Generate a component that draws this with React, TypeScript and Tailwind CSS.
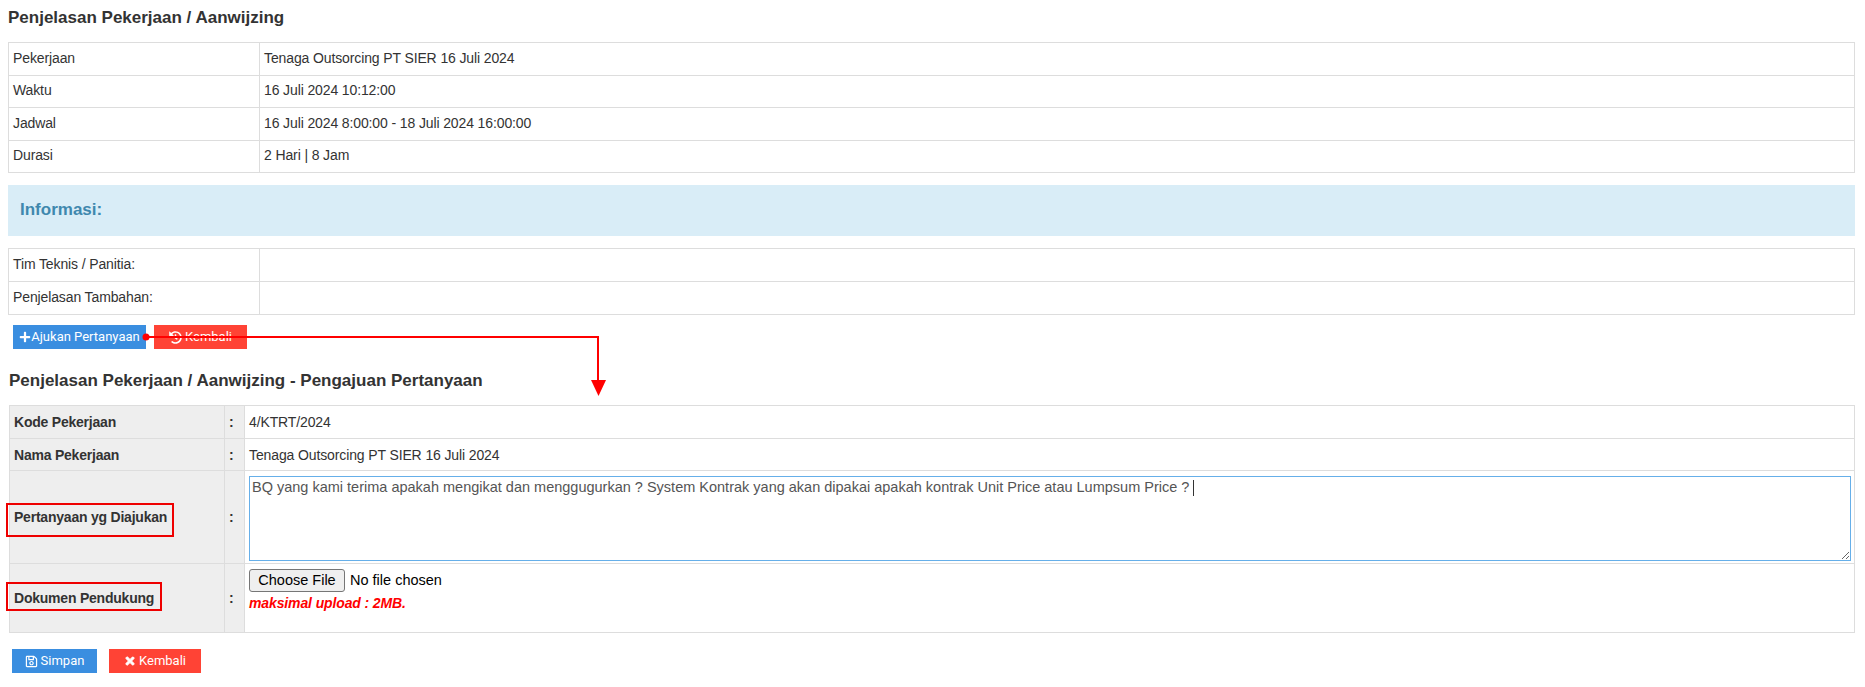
import { FaHistory, FaPlus, FaRegSave, FaTimes } from "react-icons/fa";

const jobRows = [
  ["Pekerjaan", "Tenaga Outsorcing PT SIER 16 Juli 2024"],
  ["Waktu", "16 Juli 2024 10:12:00"],
  ["Jadwal", "16 Juli 2024 8:00:00 - 18 Juli 2024 16:00:00"],
  ["Durasi", "2 Hari | 8 Jam"],
];

const infoRows = ["Tim Teknis / Panitia:", "Penjelasan Tambahan:"];

const question =
  "BQ yang kami terima apakah mengikat dan menggugurkan ? System Kontrak yang akan dipakai apakah kontrak Unit Price atau Lumpsum Price ?";

const InfoTable = ({ rows, rowClass }: { rows: string[][]; rowClass: string }) => (
  <table className="w-[1847px] border-collapse table-fixed tracking-[-0.12px]">
    <tbody>
      {rows.map(([label, value]) => (
        <tr key={label} className={rowClass}>
          <td className="w-[251px] border border-[#ddd] px-1 pb-[2px] pt-0">{label}</td>
          <td className="border border-[#ddd] px-1 pb-[2px] pt-0">{value}</td>
        </tr>
      ))}
    </tbody>
  </table>
);

const FormRow = ({
  label,
  height,
  children,
  mark,
}: {
  label: string;
  height: string;
  children: React.ReactNode;
  mark?: string;
}) => (
  <tr className={height}>
    <td className="relative w-[215px] border border-[#ddd] bg-[#eee] px-1 py-0 font-bold tracking-[-0.22px]">
      {label}
      {mark && <span className={`absolute left-[-4px] border-2 border-[#ee0000] ${mark}`} />}
    </td>
    <td className="w-[20px] border border-[#ddd] bg-[#eee] py-0 pl-1 pr-0 font-bold">:</td>
    <td className="border border-[#ddd] py-0 pl-1 pr-[3px] tracking-[-0.12px]">{children}</td>
  </tr>
);

const App = () => {
  return (
    <div className="relative h-[687px] w-[1865px] overflow-hidden bg-white pl-2 text-sm text-[#333] font-['Liberation_Sans',Arial,sans-serif]">
      <h3 className="mb-[6px] h-[36px] pt-[7px] text-[17px] leading-[22px] font-bold">
        Penjelasan Pekerjaan / Aanwijzing
      </h3>
      <InfoTable rows={jobRows} rowClass="h-[32.5px]" />

      {/* Informasi box */}
      <div className="mt-[12px] flex h-[51px] w-[1847px] items-center bg-[#d9edf7] pl-[12px] text-[17px] font-bold text-[#3f88ae]">
        Informasi:
      </div>

      <div className="mt-[12px]">
        <InfoTable rows={infoRows.map((label) => [label, ""])} rowClass="h-[33px]" />
      </div>

      <div className="mt-[10px] flex gap-2 pl-[5px] font-['Roboto',sans-serif] text-[13px] text-white">
        <button className="flex h-6 w-[133px] items-center justify-center bg-[#3a8ee0]">
          <FaPlus className="text-[12px]" />
          Ajukan Pertanyaan
        </button>
        <button className="flex h-6 w-[93px] items-center justify-center gap-[3px] bg-[#ff4335]">
          <FaHistory className="text-[13px]" />
          Kembali
        </button>
      </div>

      <h3 className="pb-[13px] pl-px pt-[21px] text-[17px] leading-[22px] font-bold">
        Penjelasan Pekerjaan / Aanwijzing - Pengajuan Pertanyaan
      </h3>

      {/* Form pengajuan */}
      <table className="ml-px w-[1846px] border-collapse table-fixed">
        <tbody>
          <FormRow label="Kode Pekerjaan" height="h-[33px]">
            4/KTRT/2024
          </FormRow>
          <FormRow label="Nama Pekerjaan" height="h-[32px]">
            Tenaga Outsorcing PT SIER 16 Juli 2024
          </FormRow>
          <FormRow label="Pertanyaan yg Diajukan" height="h-[93px]" mark="top-[32px] h-[34px] w-[168px]">
            <div className="relative mt-[2px]">
              <textarea
                defaultValue={question}
                className="block h-[85px] w-[1602px] resize-y border border-[#66afe9] px-[2px] py-0 text-[14.5px] tracking-normal text-[#555] outline-none"
              />
              <span className="absolute left-[944px] top-[4px] h-4 w-px bg-[#333]" />
            </div>
          </FormRow>
          <FormRow label="Dokumen Pendukung" height="h-[69px]" mark="top-[18px] h-[29px] w-[156px]">
            <div className="h-[63px]">
              <input
                type="file"
                className="mt-[4px] block h-[23px] text-[14.5px] leading-[21px] tracking-normal text-black file:mr-[5px] file:h-[23px] file:w-[96px] file:rounded-[3px] file:border file:border-[#767676] file:bg-[#efefef] file:text-black"
              />
              <p className="mt-px leading-[20px] font-bold italic text-[#f00]">maksimal upload : 2MB.</p>
            </div>
          </FormRow>
        </tbody>
      </table>

      <div className="mt-4 flex gap-3 pl-1 font-['Roboto',sans-serif] text-[13px] text-white">
        <button className="flex h-6 w-[85px] items-center justify-center gap-[3px] bg-[#3a8ee0]">
          <FaRegSave className="text-[13px]" />
          Simpan
        </button>
        <button className="flex h-6 w-[92px] items-center justify-center gap-[3px] bg-[#ff4335]">
          <FaTimes className="text-[12px] stroke-[40px]" />
          Kembali
        </button>
      </div>

      {/* annotation arrow */}
      <svg className="pointer-events-none absolute left-0 top-0" width="1865" height="687">
        <circle cx="146" cy="337" r="3.5" fill="#f00" />
        <path d="M146 337H598V382" fill="none" stroke="#f00" strokeWidth="2" />
        <path d="M591 380H606L598.5 396Z" fill="#f00" />
      </svg>
    </div>
  );
};

export default App;
